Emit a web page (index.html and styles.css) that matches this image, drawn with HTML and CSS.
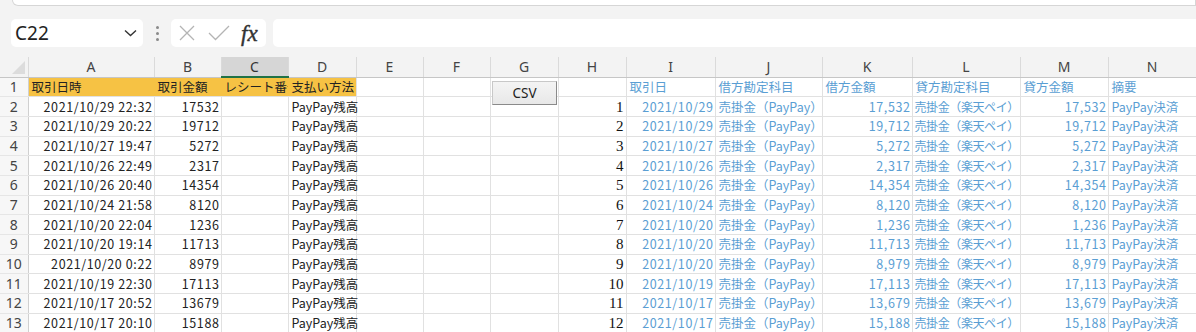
FILE: index.html
```html
<!DOCTYPE html>
<html lang="ja">
<head>
<meta charset="utf-8">
<link rel="stylesheet" href="styles.css">
</head>
<body>
<div class="app">
  <div class="ribbon-edge"></div>
  <div class="formula-row">
    <div class="namebox">
      <span class="name">C22</span>
      <svg class="chev" width="13" height="8" viewBox="0 0 13 8"><path d="M1 1.5 L6.5 6.5 L12 1.5" fill="none" stroke="#333" stroke-width="1.4"/></svg>
    </div>
    <div class="grip">
      <span></span><span></span><span></span>
    </div>
    <div class="fxbox">
      <svg class="ic-x" width="18" height="18" viewBox="0 0 18 18"><path d="M2 2 L16 16 M16 2 L2 16" stroke="#b4b4b4" stroke-width="1.3" fill="none"/></svg>
      <svg class="ic-ok" width="24" height="18" viewBox="0 0 24 18"><path d="M2 9 L8.5 15.5 L22 2" stroke="#b4b4b4" stroke-width="1.3" fill="none"/></svg>
      <span class="fx">fx</span>
    </div>
    <div class="formula-input"></div>
  </div>
  <div class="sheet">
    <table class="grid">
      <colgroup>
        <col class="c-rh"><col class="c-a"><col class="c-b"><col class="c-c"><col class="c-d"><col class="c-e"><col class="c-f"><col class="c-g"><col class="c-h"><col class="c-i"><col class="c-j"><col class="c-k"><col class="c-l"><col class="c-m"><col class="c-n">
      </colgroup>
      <thead>
        <tr class="colhead">
          <th class="corner"><span class="tri"></span></th>
          <th>A</th><th>B</th><th class="sel">C</th><th>D</th><th>E</th><th>F</th><th>G</th><th>H</th><th>I</th><th>J</th><th>K</th><th>L</th><th>M</th><th>N</th>
        </tr>
      </thead>
      <tbody>
        <tr class="hdr">
          <th>1</th>
          <td class="y">取引日時</td><td class="y">取引金額</td><td class="y clip">レシート番号</td><td class="y last">支払い方法</td>
          <td></td><td></td><td></td><td></td>
          <td class="b">取引日</td><td class="b">借方勘定科目</td><td class="b">借方金額</td><td class="b">貸方勘定科目</td><td class="b">貸方金額</td><td class="b">摘要</td>
        </tr>
        <tr><th>2</th><td class="r">2021/10/29 22:32</td><td class="r">17532</td><td></td><td class="ov">PayPay残高</td><td></td><td></td><td></td><td class="r n">1</td><td class="r b">2021/10/29</td><td class="b">売掛金（PayPay）</td><td class="r b">17,532</td><td class="b l">売掛金（楽天ペイ）</td><td class="r b">17,532</td><td class="b">PayPay決済</td></tr>
        <tr><th>3</th><td class="r">2021/10/29 20:22</td><td class="r">19712</td><td></td><td class="ov">PayPay残高</td><td></td><td></td><td></td><td class="r n">2</td><td class="r b">2021/10/29</td><td class="b">売掛金（PayPay）</td><td class="r b">19,712</td><td class="b l">売掛金（楽天ペイ）</td><td class="r b">19,712</td><td class="b">PayPay決済</td></tr>
        <tr><th>4</th><td class="r">2021/10/27 19:47</td><td class="r">5272</td><td></td><td class="ov">PayPay残高</td><td></td><td></td><td></td><td class="r n">3</td><td class="r b">2021/10/27</td><td class="b">売掛金（PayPay）</td><td class="r b">5,272</td><td class="b l">売掛金（楽天ペイ）</td><td class="r b">5,272</td><td class="b">PayPay決済</td></tr>
        <tr><th>5</th><td class="r">2021/10/26 22:49</td><td class="r">2317</td><td></td><td class="ov">PayPay残高</td><td></td><td></td><td></td><td class="r n">4</td><td class="r b">2021/10/26</td><td class="b">売掛金（PayPay）</td><td class="r b">2,317</td><td class="b l">売掛金（楽天ペイ）</td><td class="r b">2,317</td><td class="b">PayPay決済</td></tr>
        <tr><th>6</th><td class="r">2021/10/26 20:40</td><td class="r">14354</td><td></td><td class="ov">PayPay残高</td><td></td><td></td><td></td><td class="r n">5</td><td class="r b">2021/10/26</td><td class="b">売掛金（PayPay）</td><td class="r b">14,354</td><td class="b l">売掛金（楽天ペイ）</td><td class="r b">14,354</td><td class="b">PayPay決済</td></tr>
        <tr><th>7</th><td class="r">2021/10/24 21:58</td><td class="r">8120</td><td></td><td class="ov">PayPay残高</td><td></td><td></td><td></td><td class="r n">6</td><td class="r b">2021/10/24</td><td class="b">売掛金（PayPay）</td><td class="r b">8,120</td><td class="b l">売掛金（楽天ペイ）</td><td class="r b">8,120</td><td class="b">PayPay決済</td></tr>
        <tr><th>8</th><td class="r">2021/10/20 22:04</td><td class="r">1236</td><td></td><td class="ov">PayPay残高</td><td></td><td></td><td></td><td class="r n">7</td><td class="r b">2021/10/20</td><td class="b">売掛金（PayPay）</td><td class="r b">1,236</td><td class="b l">売掛金（楽天ペイ）</td><td class="r b">1,236</td><td class="b">PayPay決済</td></tr>
        <tr><th>9</th><td class="r">2021/10/20 19:14</td><td class="r">11713</td><td></td><td class="ov">PayPay残高</td><td></td><td></td><td></td><td class="r n">8</td><td class="r b">2021/10/20</td><td class="b">売掛金（PayPay）</td><td class="r b">11,713</td><td class="b l">売掛金（楽天ペイ）</td><td class="r b">11,713</td><td class="b">PayPay決済</td></tr>
        <tr><th>10</th><td class="r">2021/10/20 0:22</td><td class="r">8979</td><td></td><td class="ov">PayPay残高</td><td></td><td></td><td></td><td class="r n">9</td><td class="r b">2021/10/20</td><td class="b">売掛金（PayPay）</td><td class="r b">8,979</td><td class="b l">売掛金（楽天ペイ）</td><td class="r b">8,979</td><td class="b">PayPay決済</td></tr>
        <tr><th>11</th><td class="r">2021/10/19 22:30</td><td class="r">17113</td><td></td><td class="ov">PayPay残高</td><td></td><td></td><td></td><td class="r n">10</td><td class="r b">2021/10/19</td><td class="b">売掛金（PayPay）</td><td class="r b">17,113</td><td class="b l">売掛金（楽天ペイ）</td><td class="r b">17,113</td><td class="b">PayPay決済</td></tr>
        <tr><th>12</th><td class="r">2021/10/17 20:52</td><td class="r">13679</td><td></td><td class="ov">PayPay残高</td><td></td><td></td><td></td><td class="r n">11</td><td class="r b">2021/10/17</td><td class="b">売掛金（PayPay）</td><td class="r b">13,679</td><td class="b l">売掛金（楽天ペイ）</td><td class="r b">13,679</td><td class="b">PayPay決済</td></tr>
        <tr><th>13</th><td class="r">2021/10/17 20:10</td><td class="r">15188</td><td></td><td class="ov">PayPay残高</td><td></td><td></td><td></td><td class="r n">12</td><td class="r b">2021/10/17</td><td class="b">売掛金（PayPay）</td><td class="r b">15,188</td><td class="b l">売掛金（楽天ペイ）</td><td class="r b">15,188</td><td class="b">PayPay決済</td></tr>
      </tbody>
    </table>
    <button class="csv-btn">CSV</button>
  </div>
</div>
</body>
</html>
```

FILE: styles.css
```css
html, body {
  margin: 0;
  padding: 0;
  background: #f3f3f3;
  overflow: hidden;
}
.app {
  width: 1196px;
  height: 332px;
  overflow: hidden;
  font-family: "Noto Sans CJK JP", "Noto Sans", sans-serif;
}
.ribbon-edge {
  height: 5px;
  margin-left: 12px;
  background: #ffffff;
  border: 1px solid #d6d6d6;
  border-top: none;
  border-radius: 0 0 0 8px;
}
.formula-row {
  display: flex;
  align-items: center;
  height: 28px;
  margin-top: 13px;
  padding-left: 11px;
}
.namebox {
  width: 132px;
  height: 28px;
  box-sizing: border-box;
  background: #fff;
  border-radius: 5px;
  display: flex;
  align-items: center;
  justify-content: space-between;
  padding: 0 6px 0 4px;
}
.name {
  font-family: "Noto Sans", "Open Sans", sans-serif;
  font-size: 19px;
  color: #222;
  line-height: 1;
}
.grip {
  width: 28px;
  display: flex;
  flex-direction: column;
  align-items: center;
  gap: 3px;
}
.grip span {
  width: 3px;
  height: 3px;
  border-radius: 50%;
  background: #8a8a8a;
}
.fxbox {
  width: 95px;
  height: 28px;
  box-sizing: border-box;
  background: #fff;
  border-radius: 5px;
  display: flex;
  align-items: center;
  padding-left: 7px;
}
.ic-ok {
  margin-left: 11px;
}
.fx {
  font-family: "Liberation Serif", serif;
  font-style: italic;
  font-size: 23px;
  color: #333;
  margin-left: 10px;
  line-height: 1;
  -webkit-text-stroke: 0.4px #333;
}
.formula-input {
  flex: 1;
  height: 28px;
  margin-left: 7px;
  background: #fff;
  border-radius: 5px 0 0 5px;
}
.sheet {
  position: relative;
  margin-top: 10px;
}
.grid {
  border-collapse: collapse;
  table-layout: fixed;
  width: 1196px;
  background: #fff;
}
.c-rh { width: 28px; }
.c-a { width: 126px; }
.c-b { width: 67px; }
.c-c { width: 67px; }
.c-d { width: 68px; }
.c-e { width: 67px; }
.c-f { width: 67px; }
.c-g { width: 68px; }
.c-h { width: 68px; }
.c-i { width: 89px; }
.c-j { width: 107px; }
.c-k { width: 90px; }
.c-l { width: 108px; }
.c-m { width: 88px; }
.c-n { width: 88px; }

.colhead th {
  height: 19px;
  padding: 0;
  background: #f3f3f3;
  border-right: 1px solid #dadada;
  border-bottom: 1px solid #c6c6c6;
  font-family: "Noto Sans", "Open Sans", sans-serif;
  font-weight: normal;
  font-size: 14px;
  color: #444;
  line-height: 18px;
}
.colhead th.sel {
  background: #d6d6d6;
  border-bottom: 2px solid #217346;
  color: #333;
}
.colhead th.corner {
  position: relative;
  background: #f3f3f3;
}
.tri {
  position: absolute;
  right: 3px;
  bottom: 3px;
  width: 0;
  height: 0;
  border-left: 13px solid transparent;
  border-bottom: 13px solid #dcdcdc;
}
tbody tr {
  height: 19.7px;
}
tbody th {
  padding: 0;
  background: #f7f7f7;
  border-right: 1px solid #d0d0d0;
  border-bottom: 1px solid #e6e6e6;
  font-family: "Noto Sans", "Open Sans", sans-serif;
  font-weight: normal;
  font-size: 14px;
  color: #444;
  text-align: center;
  line-height: 18px;
}
td {
  padding: 0 2px 0 3px;
  border-right: 1px solid #e1e1e1;
  border-bottom: 1px solid #e1e1e1;
  font-size: 12.5px;
  line-height: 18px;
  color: #222;
  white-space: nowrap;
  overflow: hidden;
}
td.ov { overflow: visible; }
td.l {
  padding-left: 2px;
  padding-right: 0;
  font-size: 12px;
  letter-spacing: -0.4px;
}
td.r {
  text-align: right;
  letter-spacing: 0.6px;
  padding-right: 1px;
}
td.b { color: #5a9ed3; }
td.n {
  color: #111;
  font-family: "Liberation Serif", serif;
  font-size: 15px;
  letter-spacing: 0;
  padding-right: 2px;
}
td.y {
  background: #f6c244;
  border-right-color: #f6c244;
}
td.y.last { border-right-color: #e1e1e1; }
td.clip { text-overflow: clip; }
.csv-btn {
  position: absolute;
  left: 492px;
  top: 24px;
  width: 65px;
  height: 24px;
  padding: 0;
  background: linear-gradient(#f4f4f4, #e8e8e8);
  border: 1px solid #c8c8c8;
  border-right-color: #8a8a8a;
  border-bottom-color: #8a8a8a;
  font-family: "Noto Sans", "Open Sans", sans-serif;
  font-size: 13.5px;
  color: #222;
}
```
